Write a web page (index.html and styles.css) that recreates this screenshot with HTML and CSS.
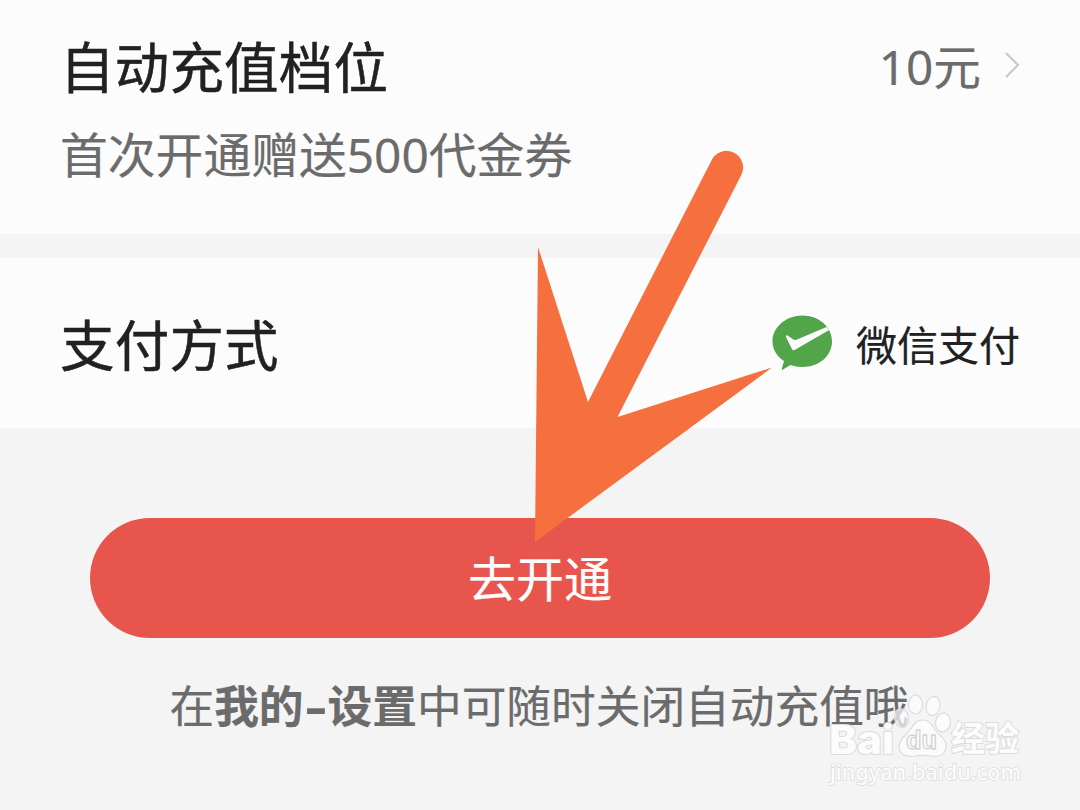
FILE: index.html
```html
<!DOCTYPE html>
<html lang="zh-CN">
<head>
    <meta charset="UTF-8">
    <meta name="viewport" content="width=device-width, initial-scale=1.0">
    <title>自动充值</title>
    <link rel="stylesheet" href="styles.css">
</head>
<body>
    <section class="card level">
        <div class="row">
            <h2>自动充值档位</h2>
            <div class="amount">
                <span>10元</span>
                <svg class="chevron" width="16" height="28" viewBox="0 0 16 28">
                    <path d="M2 2 L14 14 L2 26" fill="none" stroke="#c9c9c9" stroke-width="2.2"/>
                </svg>
            </div>
        </div>
        <p class="tip">首次开通赠送500代金券</p>
    </section>

    <section class="card payment">
        <div class="row">
            <h2>支付方式</h2>
            <div class="method">
                <svg class="wechat" width="62" height="56" viewBox="0 0 62 56">
                    <path d="M30.5 0.5 C47 0.5 60 12 60 26.5 C60 41 47 52 30.5 52 C26 52 22 51.2 18.5 50 L11 54.6 C10 55.2 9.6 54.6 9.9 53.6 L12 46 C5 41.5 0.5 34.5 0.5 26.5 C0.5 12 14 0.5 30.5 0.5 Z" fill="#52a549"/>
                    <path d="M15.5 20.5 L21 24.2 C22.5 25.2 23.5 25 25 24.4 L54.5 12 L57.2 15 L23 34.8 C21.5 35.6 20.5 35.3 19.8 33.8 L14 22 C13.5 20.5 14.3 19.7 15.5 20.5 Z" fill="#fcfcfc"/>
                </svg>
                <span>微信支付</span>
            </div>
        </div>
    </section>

    <div class="footer">
        <button class="open-btn">去开通</button>
        <p class="note">在<b>我的<span class="dash">-</span>设置</b>中可随时关闭自动充值哦</p>
    </div>

    <svg class="arrow" width="1080" height="810" viewBox="0 0 1080 810">
        <path d="M535 542 L538 247 L588 402 L711.7 159.9 A16.6 16.6 0 0 1 741.3 175.1 L617.5 417 L772 367.5 Z" fill="#f66f3f"/>
    </svg>

    <svg class="watermark" width="230" height="110" viewBox="820 690 230 110">
        <g class="wm-shape">
            <ellipse cx="901.5" cy="718" rx="7" ry="9.5" transform="rotate(-10 901.5 718)" fill-opacity="0.7"/>
            <ellipse cx="915.5" cy="704.5" rx="7" ry="9.5"/>
            <ellipse cx="933" cy="706" rx="7" ry="9.5" transform="rotate(12 933 706)"/>
            <ellipse cx="943" cy="722.5" rx="7.5" ry="9.5" transform="rotate(10 943 722.5)"/>
            <path d="M923 720 C930 720 932 725 936 731 C940 736 947 739 946 747 C945 756 938 757 931 756 C925 755 921 755 915 756 C907 757 899 755 899 747 C899 739 906 736 910 730 C914 724 916 720 923 720 Z"/>
        </g>
        <text class="wm-name" x="829" y="754" textLength="65" lengthAdjust="spacingAndGlyphs">Bai</text>
        <text class="wm-du" x="906" y="749" textLength="31" lengthAdjust="spacingAndGlyphs">du</text>
        <text class="wm-cn" x="951" y="751" textLength="68" lengthAdjust="spacingAndGlyphs">经验</text>
        <text class="wm-url" x="830" y="780" textLength="191" lengthAdjust="spacingAndGlyphs">jingyan.baidu.com</text>
    </svg>
</body>
</html>
```
FILE: styles.css
```css
* {
    box-sizing: border-box;
}

body {
    margin: 0;
    height: 810px;
    overflow: hidden;
    position: relative;
    background-color: #f4f4f4;
    font-family: "Noto Sans", "Noto Sans CJK SC", sans-serif;
    -webkit-text-stroke: 0.2px;
}

h2, p {
    margin: 0;
}

.card {
    padding: 0 60px;
    background-color: #fcfcfc;
}

.row {
    display: flex;
    align-items: center;
    justify-content: space-between;
}

h2 {
    color: #212121;
    font-size: 54.5px;
    font-weight: 400;
    line-height: 80px;
    letter-spacing: 0.2px;
    -webkit-text-stroke: 0.5px;
}

.level {
    height: 234px;
    padding-top: 27px;
    margin-bottom: 24px;
}

.amount {
    display: flex;
    align-items: center;
    gap: 23px;
    color: #6b6b6b;
    font-size: 47.7px;
    line-height: 80px;
}

.chevron {
    margin-top: -4px;
}

.tip {
    margin-top: 12px;
    color: #6b6b6b;
    font-size: 47.8px;
    line-height: 72px;
}

.payment {
    height: 170px;
    padding-top: 47px;
}

.method {
    display: flex;
    align-items: center;
    gap: 22px;
    color: #212121;
    font-size: 41px;
    line-height: 80px;
}

.wechat {
    margin-top: -5px;
}

.footer {
    padding: 89.5px 90px 0;
    text-align: center;
}

.open-btn {
    display: block;
    width: 100%;
    height: 120px;
    padding: 3px 0 0;
    border: none;
    border-radius: 60px;
    background-color: #e8554d;
    color: #fff;
    font-family: inherit;
    font-size: 48px;
    line-height: 72px;
}

.note {
    margin-top: 35.5px;
    margin-left: -2px;
    color: #6b6b6b;
    font-size: 44.7px;
    line-height: 66px;
    white-space: nowrap;
}

.dash {
    display: inline-block;
    width: 24px;
    transform: scaleX(1.5);
}

.arrow {
    position: absolute;
    top: 0;
    left: 0;
}

.watermark {
    position: absolute;
    top: 690px;
    left: 820px;
    -webkit-text-stroke: 0;
}

.wm-shape {
    fill: #fcfcfc;
    fill-opacity: 0.9;
    stroke: #dcdcdc;
    stroke-width: 1.2;
}

.wm-name, .wm-cn, .wm-url {
    fill: #fcfcfc;
    stroke: #dcdcdc;
    stroke-width: 2px;
    paint-order: stroke;
}

.wm-name {
    font: 800 40px Inter, "Liberation Sans", sans-serif;
}

.wm-du {
    fill: #fcfcfc;
    stroke: #d4d4d4;
    stroke-width: 1.3px;
    font: bold 25px "Liberation Sans", sans-serif;
}

.wm-cn {
    font: bold 34px "Noto Sans CJK SC", sans-serif;
}

.wm-url {
    stroke-width: 1.6px;
    font: 500 22px "Noto Sans", sans-serif;
}
```
